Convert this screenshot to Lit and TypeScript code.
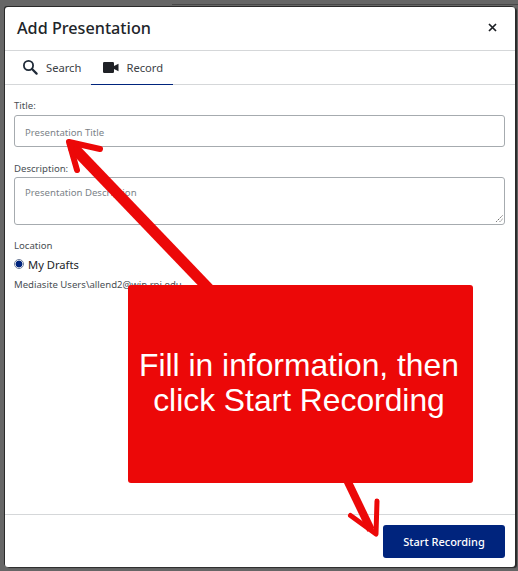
import { LitElement, html, css } from "lit";
import { customElement } from "lit/decorators.js";

@customElement("app-root")
export class AppRoot extends LitElement {
  static styles = css`
    :host {
      display: block;
      position: relative;
      width: 518px;
      height: 571px;
      overflow: hidden;
      background: #666;
      font-family: "Noto Sans", "Open Sans", sans-serif;
      color: #212529;
      box-sizing: border-box;
      padding: 7px 3px 4px 5px;
    }
    * { box-sizing: border-box; }
    .under {
      position: absolute;
      left: 172px;
      right: 0;
      top: 4px;
      height: 1px;
      background: #484848;
    }
    .modal {
      position: relative;
      height: 560px;
      background: #fff;
      border-radius: 3px;
      box-shadow: -1px -1px 0 #2a2a2a, 2px 1px 1px #2a2a2a;
      display: flex;
      flex-direction: column;
    }
    .head {
      height: 44px;
      flex: none;
      display: flex;
      align-items: center;
      justify-content: space-between;
      padding: 0 18px 2px 12px;
      border-bottom: 1px solid #d5d7d9;
    }
    h1 { margin: 0; font-size: 16.2px; font-weight: 500; color: #212529; }
    .close { display: block; }
    .tabs {
      height: 34px;
      flex: none;
      display: flex;
      padding-left: 7px;
      border-bottom: 1px solid #d5d7d9;
    }
    .tab {
      display: flex;
      align-items: center;
      gap: 8px;
      padding: 0 10px 2px;
      font-size: 11.2px;
      color: #3c4146;
      height: 34px;
    }
    .tab.active {
      border-bottom: 1px solid #00247d;
      padding: 0 10px 1px 12px;
      gap: 7px;
    }
    .body {
      flex: 1;
      padding: 13px 10px 0 9px;
      display: flex;
      flex-direction: column;
    }
    label, .lbl {
      font-size: 9.6px;
      color: #4a4f54;
      line-height: 14px;
      height: 14px;
      padding-top: 1px;
      display: block;
    }
    .field {
      margin-top: 3px;
      border: 1px solid #a6abaf;
      border-radius: 3px;
      padding: 0 10px;
      font-size: 9.6px;
      color: #7b8288;
      background: #fff;
    }
    .input { height: 32px; line-height: 32px; padding-top: 1px; margin-bottom: 14px; }
    .textarea { height: 48px; margin-top: 2px; padding-top: 8px; line-height: 14px; position: relative; margin-bottom: 13px; }
    .grip { position: absolute; right: 1px; bottom: 1px; display: block; }
    .radio { display: flex; align-items: center; gap: 4px; margin-top: 4px; font-size: 11.2px; color: #212529; height: 16px; }
    .dot {
      width: 10px; height: 10px; border-radius: 50%;
      border: 1px solid #6f7d99;
      background: radial-gradient(circle, #00247d 0 3.2px, #fff 3.7px);
    }
    .path { margin-top: 5px; }
    .foot {
      height: 53px;
      flex: none;
      border-top: 1px solid #d5d7d9;
      display: flex;
      justify-content: flex-end;
      align-items: flex-start;
      padding: 10px 10px 0 0;
    }
    .btn {
      width: 122px;
      height: 33px;
      border-radius: 3px;
      background: #00247d;
      color: #fff;
      font-size: 11px;
      font-weight: 500;
      display: flex;
      align-items: center;
      justify-content: center;
    }
    .arrows { position: absolute; left: 0; top: 0; pointer-events: none; }
    .callout {
      position: absolute;
      left: 128px;
      top: 285px;
      width: 345px;
      height: 198px;
      border-radius: 3px;
      background: #ec0808;
      color: #fff;
      font-family: "Liberation Sans", Arial, sans-serif;
      font-size: 31.8px;
      line-height: 35px;
      text-align: center;
      display: flex;
      align-items: center;
      justify-content: center;
      padding: 0 7px 2px 4px;
    }
  `;

  render() {
    return html`
      <div class="under"></div>
      <div class="modal">
        <div class="head">
          <h1>Add Presentation</h1>
          <svg class="close" width="9" height="9" viewBox="0 0 9 9">
            <path d="M1 1 8 8M8 1 1 8" stroke="#1c1f24" stroke-width="1.7" fill="none" />
          </svg>
        </div>
        <div class="tabs">
          <div class="tab">
            <svg width="16" height="16" viewBox="0 0 16 16">
              <circle cx="6.500" cy="6.500" r="4.600" fill="none" stroke="#1f2a38" stroke-width="1.8" />
              <path d="M10 10 14.600 14.600" stroke="#1f2a38" stroke-width="2.2" stroke-linecap="round" />
            </svg>
            <span>Search</span>
          </div>
          <div class="tab active">
            <svg width="16" height="11" viewBox="0 0 16 11">
              <rect x="0" y="0" width="11" height="11" rx="1.200" fill="#1f2126" />
              <path d="M10.500 4.200 15.500 1.800V9.200L10.500 6.800Z" fill="#1f2126" />
            </svg>
            <span>Record</span>
          </div>
        </div>
        <div class="body">
          <label>Title:</label>
          <div class="field input">Presentation Title</div>
          <label>Description:</label>
          <div class="field textarea">
            Presentation Description
            <svg class="grip" width="9" height="9" viewBox="0 0 9 9">
              <path d="M8.500 1.500 1.500 8.500M8.500 5 5 8.500" stroke="#666" stroke-width="1" stroke-dasharray="1.500 1" fill="none" />
            </svg>
          </div>
          <div class="lbl loc">Location</div>
          <div class="radio"><span class="dot"></span><span>My Drafts</span></div>
          <div class="lbl path">Mediasite Users\\allend2@win.rpi.edu</div>
        </div>
        <div class="foot"><div class="btn">Start Recording</div></div>
      </div>
      <svg class="arrows" width="518" height="571" viewBox="0 0 518 571">
        <g fill="none" stroke="#ec0808" stroke-linecap="round" stroke-linejoin="round">
          <path d="M210 290 72 146" stroke-width="11" stroke-linecap="butt" />
          <path d="M77 170 69 142 100 149" stroke-width="6" />
          <path d="M346 478 371 530" stroke-width="8" stroke-linecap="butt" />
          <path d="M350.500 515.500 376 534 377 501" stroke-width="5" />
        </g>
      </svg>
      <div class="callout">Fill in information, then click Start Recording</div>
    `;
  }
}
